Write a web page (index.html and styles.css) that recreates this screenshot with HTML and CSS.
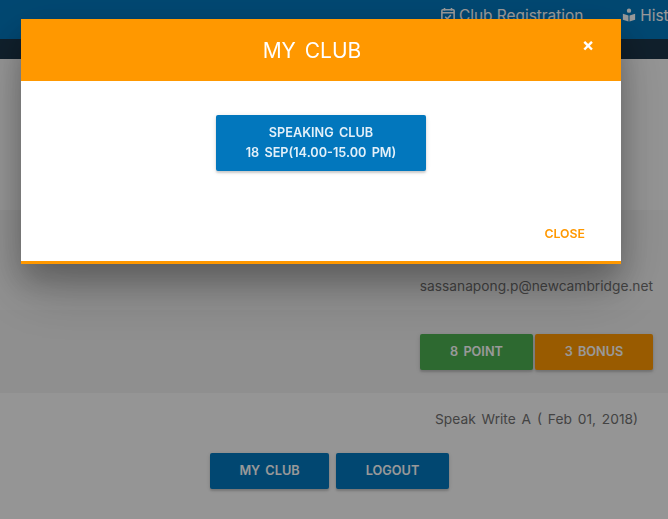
FILE: index.html
```html
<!DOCTYPE html>
<html lang="en">
<head>
<meta charset="utf-8">
<title>My Club</title>
<link rel="stylesheet" href="styles.css">
</head>
<body>
<div class="page">
  <nav class="navbar">
    <a class="nav-link">
      <svg class="nav-icon" viewBox="0 0 16 18" width="14" height="16"><path d="M2 3h12a1 1 0 0 1 1 1v12a1 1 0 0 1-1 1H2a1 1 0 0 1-1-1V4a1 1 0 0 1 1-1zM4 1v3M12 1v3M1.500 6.500h13" fill="none" stroke="currentColor" stroke-width="1.800"/><path d="M4.800 11l2.400 2.400 4-4.400" fill="none" stroke="currentColor" stroke-width="1.800"/></svg>
      Club Registration
    </a>
    <a class="nav-link">
      <svg class="nav-icon" viewBox="0 0 16 16" width="14" height="14"><circle cx="8" cy="3" r="2.500" fill="currentColor"/><path d="M1 6.500l6.400 2v7L1 13.500zM15 6.500l-6.400 2v7l6.400-2z" fill="currentColor"/></svg>
      History
    </a>
  </nav>
  <div class="hero"></div>
  <section class="band band-top"></section>
  <section class="band band-email">
    <p class="email">sassanapong.p@newcambridge.net</p>
  </section>
  <section class="band band-score">
    <div class="score-row">
      <a class="btn btn-green">8 POINT</a>
      <a class="btn btn-amber">3 BONUS</a>
    </div>
  </section>
  <section class="band band-course">
    <p class="course">Speak Write A ( Feb 01, 2018)</p>
    <div class="action-row">
      <a class="btn btn-blue">MY CLUB</a>
      <a class="btn btn-blue btn-logout">LOGOUT</a>
    </div>
  </section>
</div>
<div class="overlay"></div>
<div class="modal">
  <header class="modal-head">
    <h2 class="modal-title">MY CLUB</h2>
    <span class="modal-x">×</span>
  </header>
  <div class="modal-body">
    <a class="club-card">SPEAKING CLUB<br>18 SEP(14.00-15.00 PM)</a>
  </div>
  <footer class="modal-foot"><a class="close-link">CLOSE</a></footer>
</div>
</body>
</html>
```
FILE: styles.css
```css
* { box-sizing: border-box; }
html, body { margin: 0; height: 100%; overflow: hidden; }
body { font-family: "Inter", "Noto Sans", sans-serif; background: #f9f9f9; color: #707070; font-size: 14px; }
.page { height: 519px; overflow: hidden; display: flex; flex-direction: column; }
.navbar { height: 39px; flex: none; background: #0277bd; display: flex; gap: 39px; padding: 5px 0 0 441px; font-size: 15.400px; overflow: hidden; }
.nav-link { display: flex; align-items: center; gap: 4px; height: 20px; color: #fff; white-space: nowrap; flex: none; }
.nav-icon { flex: none; }
.hero { height: 20px; flex: none; background: #1b3549; }
.band { flex: none; }
.band-top { height: 151px; background: #f9f9f9; }
.band-email { height: 100px; background: #f1f1f1; display: flex; justify-content: flex-end; }
.band-score { height: 83px; background: #eeeeee; display: flex; justify-content: flex-end; }
.email { margin: 66px 15px 0 0; font-size: 13.750px; line-height: 20px; }
.score-row { display: flex; gap: 2px; margin: 24px 15px 0 0; }
.band-course { flex: 1; background: #f9f9f9; display: flex; flex-direction: column; }
.course { margin: 16px 30px 0 0; align-self: flex-end; font-size: 13.750px; line-height: 20px; word-spacing: 2px; }
.action-row { display: flex; gap: 7px; margin: 24px 0 0 210px; }
.btn { display: flex; align-items: center; justify-content: center; height: 36px; padding-bottom: 1px; border-radius: 2px; color: #fff; font-size: 12.700px; font-weight: 600; word-spacing: 2px; box-shadow: 0 2px 2px rgba(0,0,0,.14), 0 1px 5px rgba(0,0,0,.12); }
.btn-green { width: 113px; background: #4caf50; }
.btn-amber { width: 118px; background: #ff9800; }
.btn-blue { width: 119px; background: #0277bd; }
.btn-logout { width: 113px; }
.overlay { position: fixed; inset: 0; background: rgba(0,0,0,.4); }
.modal { position: fixed; left: 21px; top: 19px; width: 600px; background: #fff; border-bottom: 3px solid #ff9800; box-shadow: 0 16px 28px 0 rgba(0,0,0,.22), 0 25px 55px 0 rgba(0,0,0,.21); }
.modal-head { height: 62px; background: #ff9800; position: relative; display: flex; align-items: center; justify-content: center; padding-right: 18px; }
.modal-title { margin: 0; color: #fff; font-size: 21px; font-weight: 400; word-spacing: 3px; }
.modal-x { position: absolute; left: 561px; top: 14px; color: #fff; font-size: 18px; line-height: 24px; font-weight: 700; }
.modal-body { height: 120px; display: flex; justify-content: center; padding-top: 34px; }
.club-card { width: 210px; height: 56px; background: #0277bd; border-radius: 2px; color: #e3f0f9; font-size: 12.700px; font-weight: 600; line-height: 20px; word-spacing: 2px; text-align: center; padding-top: 8px; box-shadow: 0 2px 2px rgba(0,0,0,.14), 0 1px 5px rgba(0,0,0,.12); }
.modal-foot { height: 60px; display: flex; justify-content: flex-end; padding: 23px 36px 0 0; }
.close-link { color: #ff9800; font-size: 12.300px; font-weight: 600; line-height: 20px; height: 20px; }
```
